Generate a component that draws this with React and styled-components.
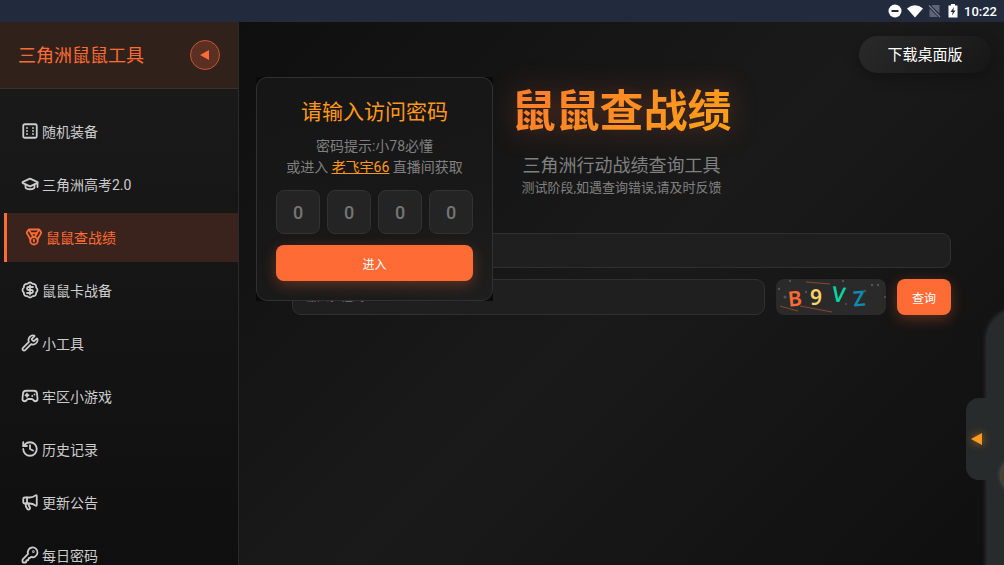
import React, { useState } from "react";
import styled, { createGlobalStyle, css } from "styled-components";
import {
  BadgeDollarSign,
  Dice6,
  Gamepad2,
  GraduationCap,
  History,
  KeyRound,
  Medal,
  Megaphone,
  Wrench,
} from "lucide-react";

const MENU = [
  { id: "random", label: "随机装备", icon: Dice6 },
  { id: "exam", label: "三角洲高考2.0", icon: GraduationCap },
  { id: "record", label: "鼠鼠查战绩", icon: Medal },
  { id: "card", label: "鼠鼠卡战备", icon: BadgeDollarSign },
  { id: "tools", label: "小工具", icon: Wrench },
  { id: "games", label: "牢区小游戏", icon: Gamepad2 },
  { id: "history", label: "历史记录", icon: History },
  { id: "news", label: "更新公告", icon: Megaphone },
  { id: "daily", label: "每日密码", icon: KeyRound },
];

const PIN_SLOTS = [1, 2, 3, 4];

const StatusIcons = () => (
  <svg width="72" height="16" viewBox="0 0 72 16" aria-hidden="true">
    <circle cx="8" cy="8" r="6.5" fill="#fff" />
    <path d="M4.5 7h7v2h-7z" fill="#222b3e" />
    <path d="M20 5.5Q28-1 36 5.5L28 14.5Z" fill="#fff" />
    <path d="M46 2H52.500v8.500L44.500 2.800ZM42.500 5.500l8.500 8.500H42.500Z" fill="#5d6576" />
    <path d="M42 2.500 53 14" stroke="#7b8291" strokeWidth="1.1" />
    <path d="M61.500 2.500H64V1h4v1.500h2.500v12h-9z" fill="#fff" />
    <path d="M67 4 63.500 9h2.200L65 12.500l3.500-5h-2.200z" fill="#222b3e" />
  </svg>
);

const CaptchaImage = () => (
  <svg width="110" height="36" viewBox="0 0 110 36" role="img" aria-label="验证码">
    <g stroke="#ff6b35" strokeOpacity=".45" fill="none">
      <path d="M4 27l18 5M24 27l32 6M30 3l24 2" />
    </g>
    <g fill="#fff" fillOpacity=".2">
      <circle cx="3" cy="10" r="1.2" />
      <circle cx="9" cy="18" r="1.5" />
      <circle cx="14" cy="2" r="1.2" />
      <circle cx="30" cy="13" r="1.2" />
      <circle cx="67" cy="2" r="1.2" />
      <circle cx="96" cy="6" r="1.2" />
      <circle cx="102" cy="6" r="1.2" />
      <circle cx="89" cy="12" r="1.2" />
      <circle cx="109" cy="18" r="1" />
      <circle cx="70" cy="25" r="1" />
    </g>
    <g fontFamily="'Noto Sans', sans-serif" fontSize="21" fontWeight="600">
      <text x="12" y="27" fill="#ff6b35" transform="rotate(-6 19 19)">B</text>
      <text x="34" y="26" fill="#ffd166">9</text>
      <text x="56" y="23" fill="#06d6a0" transform="rotate(7 63 17)">V</text>
      <text x="77" y="27" fill="#118ab2" transform="rotate(-5 83 19)">Z</text>
    </g>
  </svg>
);

const App = () => {
  const [current, setCurrent] = useState("record");

  return (
    <Page>
      <GlobalStyle />
      <StatusBar>
        <StatusIcons />
        <Clock>10:22</Clock>
      </StatusBar>
      <Body>
        <Sidebar>
          <SidebarHead>
            <Brand>三角洲鼠鼠工具</Brand>
            <Collapse type="button" aria-label="收起菜单">
              <Arrow />
            </Collapse>
          </SidebarHead>
          <Menu>
            {MENU.map(({ id, label, icon: Icon }) => (
              <MenuItem
                key={id}
                href={`#${id}`}
                $active={id === current}
                onClick={() => setCurrent(id)}
              >
                <Icon size={18} strokeWidth={2.4} />
                {label}
              </MenuItem>
            ))}
          </Menu>
        </Sidebar>

        <Main>
          <TopActions>
            <DownloadButton type="button">下载桌面版</DownloadButton>
          </TopActions>
          <Title>鼠鼠查战绩</Title>
          <Subtitle>三角洲行动战绩查询工具</Subtitle>
          <Notice>测试阶段,如遇查询错误,请及时反馈</Notice>
          <Form onSubmit={(e) => e.preventDefault()}>
            <Field type="text" aria-label="查询内容" />
            <FormRow>
              <Field type="text" placeholder="输入验证码" aria-label="验证码" />
              <Captcha type="button" aria-label="刷新验证码">
                <CaptchaImage />
              </Captcha>
              <SubmitButton type="submit">查询</SubmitButton>
            </FormRow>
          </Form>
        </Main>
      </Body>

      <ModalFrame>
        <Modal role="dialog" aria-labelledby="pin-title">
          <ModalTitle id="pin-title">请输入访问密码</ModalTitle>
          <Hint>
            密码提示:小78必懂
            <br />
            或进入 <HintLink href="#live">老飞宇66</HintLink> 直播间获取
          </Hint>
          <PinRow>
            {PIN_SLOTS.map((slot) => (
              <PinInput
                key={slot}
                type="text"
                inputMode="numeric"
                maxLength={1}
                placeholder="0"
                aria-label={`第${slot}位密码`}
              />
            ))}
          </PinRow>
          <EnterButton type="button">进入</EnterButton>
        </Modal>
      </ModalFrame>

      <Drawer>
        <DrawerBall />
      </Drawer>
      <DrawerHandle type="button" aria-label="展开面板">
        <Arrow $glow />
      </DrawerHandle>
    </Page>
  );
};

export default App;

const GlobalStyle = createGlobalStyle`
  * {
    box-sizing: border-box;
  }

  body {
    margin: 0;
    background-color: #141414;
    color: #cccccc;
    font-family: Roboto, "Noto Sans CJK SC", sans-serif;
  }

  button, input {
    font-family: inherit;
  }

  button {
    cursor: pointer;
  }
`;

const Page = styled.div`
  position: relative;
  display: flex;
  flex-direction: column;
  height: 100vh;
  overflow: hidden;
`;

const StatusBar = styled.header`
  display: flex;
  flex-shrink: 0;
  align-items: center;
  justify-content: flex-end;
  gap: 5px;
  height: 22px;
  padding: 0 7px;
  background-color: #222b3e;
`;

const Clock = styled.span`
  color: #ffffff;
  font-size: 13px;
  font-weight: 500;
`;

const Body = styled.div`
  display: flex;
  flex: 1;
  min-height: 0;
`;

const Sidebar = styled.aside`
  display: flex;
  flex-direction: column;
  flex-shrink: 0;
  width: 239px;
  overflow: hidden;
  background: linear-gradient(180deg, #1b1b1b, #0f0f0f);
  border-right: 1px solid #2a2a2a;
`;

const SidebarHead = styled.div`
  display: flex;
  flex-shrink: 0;
  align-items: center;
  justify-content: space-between;
  height: 67px;
  padding: 0 18px;
  background-color: #31211b;
  border-bottom: 1px solid #3a302c;
`;

const Brand = styled.h2`
  margin: 0;
  padding-bottom: 2px;
  color: #ff6b35;
  font-size: 18px;
  font-weight: 400;
`;

const Collapse = styled.button`
  display: flex;
  align-items: center;
  justify-content: center;
  width: 30px;
  height: 30px;
  padding: 0 2px 0 0;
  background-color: #5b3022;
  border: 1px solid #c4562f;
  border-radius: 50%;
`;

const Arrow = styled.span`
  width: 0;
  height: 0;
  border: solid transparent;
  border-width: 5px 9px 5px 0;
  border-right-color: #ff6b35;

  ${({ $glow }) =>
    $glow &&
    css`
      border-width: 6px 11px 6px 0;
      border-right-color: #ff9a1f;
      filter: drop-shadow(0 0 4px rgba(255, 154, 31, 0.6));
    `}
`;

const Menu = styled.nav`
  display: flex;
  flex-direction: column;
  gap: 4px;
  padding-top: 18px;
`;

const MenuItem = styled.a`
  display: flex;
  flex-shrink: 0;
  align-items: center;
  gap: 3px;
  height: 49px;
  padding: 0 0 2px 21px;
  color: #cccccc;
  font-size: 14px;
  text-decoration: none;

  ${({ $active }) =>
    $active &&
    css`
      margin-left: 4px;
      padding-left: 18px;
      color: #ff6b35;
      background-color: #3a231c;
      border-left: 3px solid #ff6b35;
    `}
`;

const Main = styled.main`
  display: flex;
  flex: 1;
  flex-direction: column;
  align-items: center;
  min-width: 0;
  padding: 14px 53px 0;
  background: linear-gradient(135deg, #0f0f0f, #1a1a1a 50%, #0f0f0f);
`;

const TopActions = styled.div`
  display: flex;
  align-self: stretch;
  justify-content: flex-end;
  margin-right: -40px;
`;

const DownloadButton = styled.button`
  width: 132px;
  height: 37px;
  padding: 0 0 2px;
  color: #ffffff;
  font-size: 15px;
  background: linear-gradient(135deg, #2a2a2a, #161616);
  border: none;
  border-radius: 19px;
  box-shadow: 0 4px 14px rgba(0, 0, 0, 0.3);
`;

const Title = styled.h1`
  margin: 7px 0 0;
  color: transparent;
  font-size: 44px;
  font-weight: 700;
  line-height: 64px;
  background: linear-gradient(135deg, #ff7b2e, #ffa116);
  background-clip: text;
  filter: drop-shadow(0 0 14px rgba(255, 107, 53, 0.3));
`;

const Subtitle = styled.p`
  margin: 10px 0 0;
  color: #808080;
  font-size: 18px;
  line-height: 24px;
`;

const Notice = styled.p`
  margin: 0;
  color: #808080;
  font-size: 13px;
  line-height: 20px;
`;

const Form = styled.form`
  display: flex;
  flex-direction: column;
  gap: 11px;
  width: 100%;
  margin-top: 35px;
`;

const FormRow = styled.div`
  display: flex;
  gap: 11px;
`;

const Field = styled.input`
  flex: 1;
  min-width: 0;
  height: 36px;
  padding: 7px 12px;
  color: #ffffff;
  font-size: 12px;
  background-color: #1f1f1f;
  border: 1px solid #303030;
  border-radius: 9px;
  outline: none;

  ${Form} > & {
    flex: none;
    height: 35px;
  }

  &::placeholder {
    color: #757575;
  }
`;

const Captcha = styled.button`
  display: flex;
  width: 110px;
  height: 36px;
  padding: 0;
  overflow: hidden;
  background-color: #2a2a2a;
  border: none;
  border-radius: 8px;
`;

const SubmitButton = styled.button`
  width: 54px;
  height: 36px;
  padding: 0;
  color: #ffffff;
  font-size: 12px;
  background-color: #ff6b35;
  border: none;
  border-radius: 8px;
  box-shadow: 0 4px 14px rgba(255, 107, 53, 0.3);
`;

const ModalFrame = styled.div`
  position: absolute;
  top: 77px;
  left: 256px;
  width: 237px;
  background-color: #0a0a0a;
`;

const Modal = styled.section`
  display: flex;
  flex-direction: column;
  padding: 19px;
  background: linear-gradient(160deg, #161616, #181818 60%, #1e1e1e);
  border: 1px solid #303030;
  border-radius: 11px;
`;

const ModalTitle = styled.h2`
  margin: 0;
  color: #ff981c;
  font-size: 21px;
  font-weight: 400;
  line-height: 31px;
  text-align: center;
`;

const Hint = styled.p`
  margin: 8px 0 0;
  color: #808080;
  font-size: 14px;
  line-height: 21px;
  text-align: center;
  white-space: nowrap;
`;

const HintLink = styled.a`
  color: #ff981c;
`;

const PinRow = styled.div`
  display: grid;
  grid-template-columns: repeat(4, 1fr);
  gap: 7px;
  margin-top: 12px;
`;

const PinInput = styled.input`
  width: 100%;
  height: 44px;
  padding: 0;
  color: #ffffff;
  font-size: 18px;
  font-weight: 500;
  text-align: center;
  background-color: #242424;
  border: 1px solid #323232;
  border-radius: 8px;
  outline: none;

  &::placeholder {
    color: #757575;
  }
`;

const EnterButton = styled.button`
  height: 36px;
  margin-top: 11px;
  color: #ffffff;
  font-size: 12px;
  background-color: #ff6b35;
  border: none;
  border-radius: 8px;
  box-shadow: 0 4px 14px rgba(255, 107, 53, 0.3);
`;

const Drawer = styled.aside`
  position: absolute;
  top: 310px;
  right: -100px;
  bottom: -30px;
  width: 117px;
  background-color: #282b2b;
  border-radius: 30px;
  box-shadow: 0 0 5px 1px rgba(255, 255, 255, 0.16);
`;

const DrawerBall = styled.div`
  width: 34px;
  height: 34px;
  margin: 148px 0 0 14px;
  background-color: #4a3b2c;
  border-radius: 50%;
  box-shadow: 0 0 5px rgba(255, 255, 255, 0.3);
`;

const DrawerHandle = styled.button`
  position: absolute;
  top: 398px;
  right: 0;
  display: flex;
  align-items: center;
  width: 38px;
  height: 82px;
  padding: 0 0 0 5px;
  background: linear-gradient(90deg, #282b2b 24px, transparent 24px);
  border: none;
  border-radius: 13px 0 0 13px;
`;
